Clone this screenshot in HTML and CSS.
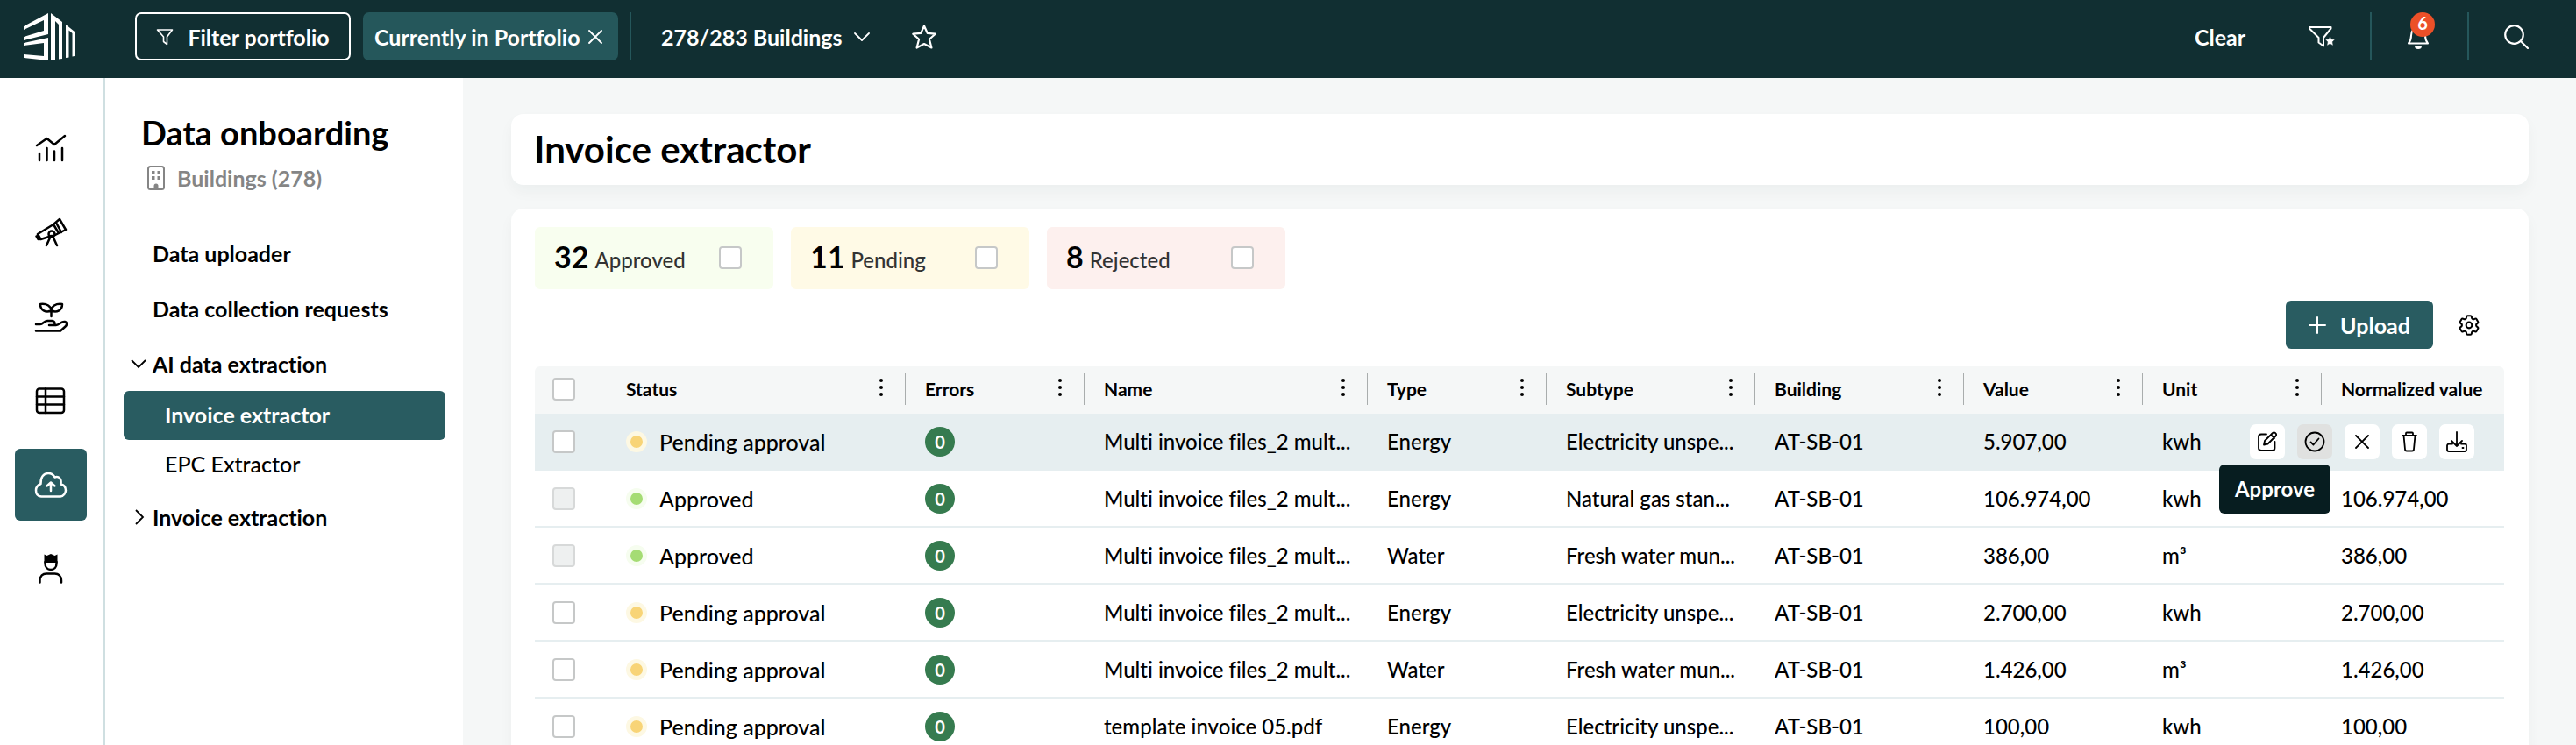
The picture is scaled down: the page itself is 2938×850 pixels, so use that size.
FILE: index.html
```html
<!DOCTYPE html>
<html lang="en">
<head>
    <meta charset="UTF-8">
    <meta name="viewport" content="width=device-width, initial-scale=1.0">
    <title>Invoice extractor</title>
    <link rel="stylesheet" href="styles.css">
</head>
<body>
    <header class="topbar">
        <a class="logo" href="#" aria-label="Home">
            <svg width="58" height="54" viewBox="0 0 58 54" fill="#fff">
                <path d="M0 15L28 0V24L0 31V27L23 20V8L0 19z"/>
                <path d="M0 34L28 28V54L0 51V47L23 49V34L0 37z"/>
                <path d="M31 0L44 10V52L40 52.500V13L36 9V53L31 54z"/>
                <path d="M48 13L58 21V49L55.500 49.500V23L51.500 19.500V50.500L48 51z"/>
            </svg>
        </a>
        <button class="btn-filter" type="button">
            <svg width="20" height="20" viewBox="0 0 20 20" fill="none" stroke="#fff" stroke-width="1.600" stroke-linejoin="round"><path d="M1.500 2h17l-6 8v8.500l-4-3V10z"/></svg>
            Filter portfolio
        </button>
        <button class="chip" type="button">
            Currently in Portfolio
            <svg width="16" height="16" viewBox="0 0 16 16" stroke="#fff" stroke-width="1.800" stroke-linecap="round"><path d="M1 1l14 14M15 1L1 15"/></svg>
        </button>
        <span class="divider thin"></span>
        <button class="btn-buildings" type="button">
            278/283 Buildings
            <svg width="18" height="12" viewBox="0 0 18 12" fill="none" stroke="#fff" stroke-width="1.800" stroke-linecap="round" stroke-linejoin="round"><path d="M1 2l8 8 8-8"/></svg>
        </button>
        <button class="btn-icon" type="button" aria-label="Favourite">
            <svg width="28" height="28" viewBox="0 0 28 28" fill="none" stroke="#fff" stroke-width="2.200" stroke-linejoin="round"><path d="M14 1.500l3.700 8.300 9 .9-6.800 6 2.500 9.800L14 22l-8.400 4.500 2.500-9.800-6.800-6 9-.9z"/></svg>
        </button>
        <div class="topbar-right">
            <button class="btn-clear" type="button">Clear</button>
            <button class="btn-icon" type="button" aria-label="Saved filters">
                <svg width="30" height="26" viewBox="0 0 30 26" fill="none" stroke="#fff" stroke-width="2" stroke-linejoin="round"><path d="M1 2h24.500v1.500L17 14v9.500l-5.500-4V14L1 3.500z"/><path d="M24.500 12l1.700 3.700 3.800.4-2.800 2.700.9 4.200-3.600-2.100-3.600 2.100.9-4.200-2.800-2.700 3.800-.4z" fill="#fff" stroke="#112f32" stroke-width=".4"/></svg>
            </button>
            <span class="divider"></span>
            <button class="btn-icon bell" type="button" aria-label="Notifications">
                <svg width="26" height="28" viewBox="0 0 26 28" fill="none" stroke="#fff" stroke-width="2" stroke-linejoin="round"><path d="M2 21.500c2.500-3 3-5 3-9C5 7 8 4 13 4s8 3 8 8.500c0 4 .5 6 3 9z"/><path d="M9 24.500h8a4 3.500 0 0 1-8 0z" fill="#fff" stroke="none"/></svg>
                <span class="badge">6</span>
            </button>
            <span class="divider"></span>
            <button class="btn-icon" type="button" aria-label="Search">
                <svg width="28" height="28" viewBox="0 0 28 28" fill="none" stroke="#fff" stroke-width="2.200" stroke-linecap="round"><circle cx="11.500" cy="11.500" r="10.300"/><path d="M19 19l8 8"/></svg>
            </button>
        </div>
    </header>

    <div class="layout">
        <nav class="rail" aria-label="Main">
            <a href="#" aria-label="Analytics">
                <svg width="38" height="36" viewBox="0 0 38 36"><path d="M3 15L14.500 7 23 14 35 4M6 24v8M14.500 18v14M23 21.500V32M32 18v14"/></svg>
            </a>
            <a href="#" aria-label="Explore">
                <svg width="38" height="36" viewBox="0 0 38 36"><path d="M22 9l7-6 7 12-8 4zM22 9L4 20l3.500 6L17 23M24 21l4-2M25 7l6 11M2.500 22.500l2 3.500M4 21l3 5M19 22l-5 11M21 22l5 11"/><circle cx="20" cy="20" r="3.500"/></svg>
            </a>
            <a href="#" aria-label="Sustainability">
                <svg width="38" height="36" viewBox="0 0 38 36"><path d="M19.500 18v-6.500c0-5-5-8.500-12.500-7.500 0 7 6 10 12.500 7.500zM19.500 11.500c0-5 5-8.500 12.500-7.500 0 7-6 10-12.500 7.500M2 27h5c3 0 4-4 8-4h5c4 0 5 5 1 5h-4 8c4 0 6-5 10-4 3 1 2.500 4 0 6l-5 4.500H2"/></svg>
            </a>
            <a href="#" aria-label="Tables">
                <svg width="38" height="36" viewBox="0 0 38 36"><rect x="3" y="4.500" width="31" height="27.500" rx="3"/><path d="M3 13.500h31M3 22.500h31M13 4.500V32"/></svg>
            </a>
            <a class="active" href="#" aria-label="Data onboarding">
                <svg width="38" height="36" viewBox="0 0 38 36"><path d="M8 31.500C4 31 2 28 2 24.500S4 18.500 7.500 17C7 10 10.500 5 16 5c4 0 6 1.500 7.500 4.500C28 8 31.500 11 30.500 17.500c4 1 5.500 4 5.500 7s-2.500 6.500-6 7zM19 25v-9M14.500 19.500L19 15.500l4.500 4"/></svg>
            </a>
            <a href="#" aria-label="Account">
                <svg width="38" height="36" viewBox="0 0 38 36"><path d="M6.500 33.500v-2C6.500 26 10 23.500 14 23.500h9.500c4 0 7.500 2.500 7.500 8v2M12.500 10v2c0 4 2.500 7 6.500 7s6.500-3 6.500-7v-2"/><path d="M11.500 1.500l3 1.500L19 1l4.500 2 3-1.500V11h-15z" fill="#000" stroke="none"/></svg>
            </a>
        </nav>

        <aside class="panel">
            <h2>Data onboarding</h2>
            <p class="scope">
                <svg width="20" height="28" viewBox="0 0 20 28" fill="none" stroke="#858585" stroke-width="2"><rect x="1" y="1" width="18" height="26" rx="2.500"/><path d="M5 8h3.500M11.500 8H15M5 14h3.500M11.500 14H15" stroke-width="4"/><path d="M7.500 27v-4a2.500 2.500 0 0 1 5 0v4z" fill="#858585" stroke="none"/></svg>
                Buildings (278)
            </p>
            <nav class="tree" aria-label="Data onboarding">
                <a href="#">Data uploader</a>
                <a href="#">Data collection requests</a>
                <button type="button" aria-expanded="true">
                    <svg width="18" height="18" viewBox="0 0 18 18"><path d="M1 5l8 8 8-8"/></svg>
                    AI data extraction
                </button>
                <a class="sub active" href="#">Invoice extractor</a>
                <a class="sub" href="#">EPC Extractor</a>
                <button type="button" aria-expanded="false">
                    <svg width="18" height="18" viewBox="0 0 18 18"><path d="M6 1l8 8-8 8"/></svg>
                    Invoice extraction
                </button>
            </nav>
        </aside>

        <main class="content">
            <section class="card title-card">
                <h1>Invoice extractor</h1>
            </section>

            <section class="card table-card">
                <div class="summary">
                    <label class="stat approved"><b>32</b> <span>Approved</span><input type="checkbox"></label>
                    <label class="stat pending"><b>11</b> <span>Pending</span><input type="checkbox"></label>
                    <label class="stat rejected"><b>8</b> <span>Rejected</span><input type="checkbox"></label>
                </div>

                <div class="toolbar">
                    <button class="btn-upload" type="button">
                        <svg width="20" height="20" viewBox="0 0 20 20" stroke="#fff" stroke-width="2" stroke-linecap="round"><path d="M10 1v18M1 10h18"/></svg>
                        Upload
                    </button>
                    <button class="btn-settings" type="button" aria-label="Table settings">
                        <svg width="24" height="24" viewBox="2 2 20 20" fill="none" stroke="#000" stroke-width="1.700" stroke-linejoin="round"><path d="M9.594 3.940c.09-.542.56-.94 1.110-.94h2.593c.55 0 1.020.398 1.110.94l.213 1.281c.063.374.313.686.645.87.074.04.147.083.22.127.325.196.72.257 1.075.124l1.217-.456a1.125 1.125 0 0 1 1.370.49l1.296 2.247a1.125 1.125 0 0 1-.26 1.431l-1.003.827c-.293.241-.438.613-.43.992a7.723 7.723 0 0 1 0 .255c-.008.378.137.75.43.991l1.004.827c.424.35.534.955.26 1.430l-1.298 2.247a1.125 1.125 0 0 1-1.369.491l-1.217-.456c-.355-.133-.75-.072-1.076.124a6.470 6.470 0 0 1-.22.128c-.331.183-.581.495-.644.869l-.213 1.281c-.09.543-.56.94-1.110.94h-2.594c-.55 0-1.019-.398-1.110-.94l-.213-1.281c-.062-.374-.312-.686-.644-.87a6.520 6.520 0 0 1-.22-.127c-.325-.196-.72-.257-1.076-.124l-1.217.456a1.125 1.125 0 0 1-1.369-.49l-1.297-2.247a1.125 1.125 0 0 1 .26-1.431l1.004-.827c.292-.24.437-.613.43-.991a6.932 6.932 0 0 1 0-.255c.007-.38-.138-.751-.43-.992l-1.004-.827a1.125 1.125 0 0 1-.26-1.430l1.297-2.247a1.125 1.125 0 0 1 1.370-.491l1.216.456c.356.133.751.072 1.076-.124.072-.044.146-.086.22-.128.332-.183.582-.495.644-.869z"/><circle cx="12" cy="12" r="2.800"/></svg>
                    </button>
                </div>

                <table>
                    <colgroup>
                        <col class="col-check">
                        <col class="col-status">
                        <col class="col-small">
                        <col class="col-name">
                        <col class="col-small">
                        <col class="col-medium">
                        <col class="col-medium">
                        <col class="col-small">
                        <col class="col-small">
                        <col>
                    </colgroup>
                    <thead>
                        <tr>
                            <th><input type="checkbox" aria-label="Select all"></th>
                            <th><div class="head">Status <button type="button" class="kebab" aria-label="Status menu"><i></i><i></i><i></i></button></div></th>
                            <th><div class="head">Errors <button type="button" class="kebab" aria-label="Errors menu"><i></i><i></i><i></i></button></div></th>
                            <th><div class="head">Name <button type="button" class="kebab" aria-label="Name menu"><i></i><i></i><i></i></button></div></th>
                            <th><div class="head">Type <button type="button" class="kebab" aria-label="Type menu"><i></i><i></i><i></i></button></div></th>
                            <th><div class="head">Subtype <button type="button" class="kebab" aria-label="Subtype menu"><i></i><i></i><i></i></button></div></th>
                            <th><div class="head">Building <button type="button" class="kebab" aria-label="Building menu"><i></i><i></i><i></i></button></div></th>
                            <th><div class="head">Value <button type="button" class="kebab" aria-label="Value menu"><i></i><i></i><i></i></button></div></th>
                            <th><div class="head">Unit <button type="button" class="kebab" aria-label="Unit menu"><i></i><i></i><i></i></button></div></th>
                            <th>Normalized value</th>
                        </tr>
                    </thead>
                    <tbody>
                        <tr class="hovered">
                            <td><input type="checkbox" aria-label="Select row"></td>
                            <td><div class="status"><span class="dot yellow"></span>Pending approval</div></td>
                            <td><span class="errors">0</span></td>
                            <td>Multi invoice files_2 mult...</td>
                            <td>Energy</td>
                            <td>Electricity unspe...</td>
                            <td>AT-SB-01</td>
                            <td>5.907,00</td>
                            <td>kwh</td>
                            <td class="actions-cell">
                                <div class="actions">
                                    <button type="button" aria-label="Edit">
                                        <svg width="24" height="24" viewBox="0 0 24 24"><path d="M11 3.500H5A3 3 0 0 0 2 6.500V19a3 3 0 0 0 3 3h12.500a3 3 0 0 0 3-3v-7M8 15.500l1-4.500 9-9a2 2 0 0 1 3 0l.5.500a2 2 0 0 1 0 3l-9 9zM16 4l4 4"/></svg>
                                    </button>
                                    <button type="button" class="current" aria-label="Approve">
                                        <svg width="24" height="24" viewBox="0 0 24 24"><circle cx="12" cy="12" r="10.500"/><path d="M7.500 12.500l3 3 6-7"/></svg>
                                        <span class="tooltip">Approve</span>
                                    </button>
                                    <button type="button" aria-label="Reject">
                                        <svg width="24" height="24" viewBox="0 0 24 24"><path d="M5 5l14 14M19 5L5 19"/></svg>
                                    </button>
                                    <button type="button" aria-label="Delete">
                                        <svg width="24" height="24" viewBox="0 0 24 24"><path d="M4 5h16M8 5V2.500a1 1 0 0 1 1-1h6a1 1 0 0 1 1 1V5M5.500 5l1.500 15.500a2 2 0 0 0 2 2h6a2 2 0 0 0 2-2L18.500 5"/></svg>
                                    </button>
                                    <button type="button" aria-label="Download">
                                        <svg width="24" height="24" viewBox="0 0 24 24"><path d="M12 1v16M6 11l6 6 6-6M7 14.500H3a2 2 0 0 0-2 2V21a2 2 0 0 0 2 2h18a2 2 0 0 0 2-2v-4.500a2 2 0 0 0-2-2h-4M18.500 19h1"/></svg>
                                    </button>
                                </div>
                            </td>
                        </tr>
                        <tr>
                            <td><input type="checkbox" aria-label="Select row" disabled></td>
                            <td><div class="status"><span class="dot green"></span>Approved</div></td>
                            <td><span class="errors">0</span></td>
                            <td>Multi invoice files_2 mult...</td>
                            <td>Energy</td>
                            <td>Natural gas stan...</td>
                            <td>AT-SB-01</td>
                            <td>106.974,00</td>
                            <td>kwh</td>
                            <td>106.974,00</td>
                        </tr>
                        <tr>
                            <td><input type="checkbox" aria-label="Select row" disabled></td>
                            <td><div class="status"><span class="dot green"></span>Approved</div></td>
                            <td><span class="errors">0</span></td>
                            <td>Multi invoice files_2 mult...</td>
                            <td>Water</td>
                            <td>Fresh water mun...</td>
                            <td>AT-SB-01</td>
                            <td>386,00</td>
                            <td>m³</td>
                            <td>386,00</td>
                        </tr>
                        <tr>
                            <td><input type="checkbox" aria-label="Select row"></td>
                            <td><div class="status"><span class="dot yellow"></span>Pending approval</div></td>
                            <td><span class="errors">0</span></td>
                            <td>Multi invoice files_2 mult...</td>
                            <td>Energy</td>
                            <td>Electricity unspe...</td>
                            <td>AT-SB-01</td>
                            <td>2.700,00</td>
                            <td>kwh</td>
                            <td>2.700,00</td>
                        </tr>
                        <tr>
                            <td><input type="checkbox" aria-label="Select row"></td>
                            <td><div class="status"><span class="dot yellow"></span>Pending approval</div></td>
                            <td><span class="errors">0</span></td>
                            <td>Multi invoice files_2 mult...</td>
                            <td>Water</td>
                            <td>Fresh water mun...</td>
                            <td>AT-SB-01</td>
                            <td>1.426,00</td>
                            <td>m³</td>
                            <td>1.426,00</td>
                        </tr>
                        <tr>
                            <td><input type="checkbox" aria-label="Select row"></td>
                            <td><div class="status"><span class="dot yellow"></span>Pending approval</div></td>
                            <td><span class="errors">0</span></td>
                            <td>template invoice 05.pdf</td>
                            <td>Energy</td>
                            <td>Electricity unspe...</td>
                            <td>AT-SB-01</td>
                            <td>100,00</td>
                            <td>kwh</td>
                            <td>100,00</td>
                        </tr>
                    </tbody>
                </table>
            </section>
        </main>
    </div>
</body>
</html>
```
FILE: styles.css
```css
* {
    margin: 0;
    padding: 0;
    box-sizing: border-box;
}

body {
    font-family: Lato, 'Open Sans', sans-serif;
    font-size: 25px;
    font-variant-ligatures: none;
    line-height: 30px;
    color: #000;
    background-color: #f5f7f7;
    height: 100vh;
    display: flex;
    flex-direction: column;
    overflow: hidden;
}

button {
    font: inherit;
    font-variant-ligatures: none;
    color: inherit;
    background: none;
    border: none;
    cursor: pointer;
    white-space: nowrap;
}

a {
    color: inherit;
    text-decoration: none;
}

svg {
    display: block;
    flex-shrink: 0;
}

/* Top bar */
.topbar {
    display: flex;
    align-items: center;
    flex-shrink: 0;
    padding: 14px 54px 20px 27px;
    background-color: #112f32;
    color: #fff;
    font-weight: bold;
}

.logo {
    margin-right: 69px;
}

.btn-filter,
.chip,
.btn-buildings {
    display: flex;
    align-items: center;
    justify-content: center;
    height: 55px;
}

.btn-filter {
    gap: 16px;
    min-width: 246px;
    border: 2px solid #fff;
    border-radius: 7px;
}

.chip {
    justify-content: flex-start;
    gap: 9px;
    min-width: 291px;
    margin-left: 14px;
    padding-left: 13px;
    border-radius: 7px;
    background-color: #25575b;
}

.divider {
    width: 2px;
    height: 55px;
    background-color: #25575b;
}

.divider.thin {
    width: 1px;
    margin-left: 14px;
}

.btn-buildings {
    gap: 14px;
    margin-left: 34px;
    margin-right: 48px;
}

.topbar-right {
    display: flex;
    align-items: center;
    gap: 40px;
    margin-left: auto;
}

.btn-clear {
    margin-right: 32px;
}

.bell {
    position: relative;
    margin-right: 3px;
}

.badge {
    position: absolute;
    top: -14px;
    left: 4px;
    width: 28px;
    height: 28px;
    border-radius: 50%;
    background-color: #ec5028;
    font-size: 20px;
    line-height: 24px;
    text-align: center;
}

.layout {
    display: flex;
    flex: 1;
    min-height: 0;
}

/* Icon rail */
.rail {
    display: flex;
    flex-direction: column;
    align-items: center;
    flex-shrink: 0;
    gap: 14px;
    width: 120px;
    padding-top: 39px;
    padding-right: 2px;
    background-color: #fff;
    border-right: 2px solid #cfdfe1;
}

.rail a {
    display: flex;
    align-items: center;
    justify-content: center;
    width: 82px;
    height: 82px;
    border-radius: 6px;
}

.rail svg {
    fill: none;
    stroke: #000;
    stroke-width: 2.5;
    stroke-linecap: round;
    stroke-linejoin: round;
}

.rail .active {
    background-color: #295c61;
}

.rail .active svg {
    stroke: #fff;
}

/* Side panel */
.panel {
    flex-shrink: 0;
    width: 408px;
    padding: 40px 20px 0 21px;
    background-color: #fff;
}

.panel h2 {
    padding-left: 20px;
    font-size: 38px;
    line-height: 44px;
}

.scope {
    display: flex;
    align-items: center;
    gap: 14px;
    margin: 15px 0 39px 27px;
    color: #858585;
    font-weight: bold;
}

.tree {
    display: flex;
    flex-direction: column;
}

.tree a,
.tree button {
    display: flex;
    align-items: center;
    gap: 7px;
    height: 63px;
    padding-left: 33px;
    border-radius: 6px;
    font-weight: bold;
}

.tree button {
    padding-left: 8px;
}

.tree svg {
    fill: none;
    stroke: #000;
    stroke-width: 1.8;
}

.tree .sub {
    height: 56px;
    padding-left: 47px;
    padding-bottom: 2px;
    font-weight: 500;
}

.tree .sub.active {
    background-color: #295c61;
    color: #fff;
    font-weight: bold;
}

/* Main content */
.content {
    flex: 1;
    min-width: 0;
    padding: 41px 54px 0 55px;
}

.card {
    background-color: #fff;
    border-radius: 14px;
    box-shadow: 0 8px 16px rgba(17, 47, 50, 0.04);
}

.title-card {
    padding: 15px 26px 16px;
    margin-bottom: 27px;
}

h1 {
    font-size: 42px;
    line-height: 50px;
}

.table-card {
    padding: 21px 28px 20px 27px;
}

.summary {
    display: flex;
    gap: 20px;
}

.stat {
    display: flex;
    align-items: baseline;
    gap: 7px;
    width: 272px;
    height: 71px;
    padding: 14px 36px 0 22px;
    border-radius: 6px;
    color: #333;
    font-size: 24px;
    font-weight: 500;
}

.stat b {
    color: #000;
    font-size: 34px;
    line-height: 40px;
}

.stat input {
    align-self: flex-start;
    margin: 8px 0 0 auto;
}

.approved {
    background-color: #f8feef;
}

.pending {
    background-color: #fffae6;
}

.rejected {
    background-color: #fdf0ee;
}

input[type="checkbox"] {
    appearance: none;
    display: block;
    flex-shrink: 0;
    width: 26px;
    height: 26px;
    border: 2px solid #c6c8c8;
    border-radius: 4px;
    background-color: #fff;
}

input[type="checkbox"]:disabled {
    border-color: #d7d9d9;
    background-color: #eef0f0;
}

.toolbar {
    display: flex;
    align-items: center;
    justify-content: flex-end;
    gap: 29px;
    padding: 13px 28px 20px 0;
}

.btn-upload {
    display: flex;
    align-items: center;
    justify-content: center;
    gap: 16px;
    min-width: 168px;
    height: 55px;
    border-radius: 6px;
    background-color: #295c61;
    color: #fff;
    font-weight: bold;
}

/* Table */
table {
    width: 100%;
    table-layout: fixed;
    border-collapse: separate;
    border-spacing: 0;
}

.col-check {
    width: 82px;
}

.col-status {
    width: 341px;
}

.col-small {
    width: 204px;
}

.col-name {
    width: 323px;
}

.col-medium {
    width: 238px;
}

th {
    height: 54px;
    padding-left: 22px;
    padding-bottom: 2px;
    background-color: #f5f7f7;
    font-size: 21px;
    text-align: left;
    white-space: nowrap;
}

th:first-child {
    border-top-left-radius: 6px;
}

th:last-child {
    border-top-right-radius: 6px;
}

.head {
    display: flex;
    align-items: center;
    justify-content: space-between;
    height: 36px;
    padding-right: 23px;
    border-right: 1px solid #a9adad;
}

.kebab {
    display: flex;
    flex-direction: column;
    gap: 4px;
    padding: 0 2px 4px;
}

.kebab i {
    width: 4px;
    height: 4px;
    border-radius: 50%;
    background-color: #000;
}

td {
    height: 65px;
    padding-left: 22px;
    border-bottom: 2px solid #e6eef0;
    font-size: 24px;
    font-weight: 500;
    white-space: nowrap;
}

th:first-child,
td:first-child {
    padding-left: 20px;
}

.hovered td {
    background-color: #e6eef0;
}

.status {
    display: flex;
    align-items: center;
    gap: 14px;
    font-size: 25px;
}

.dot {
    width: 24px;
    height: 24px;
    border: 5px solid;
    border-radius: 50%;
}

.dot.yellow {
    border-color: #fdf8e3;
    background-color: #f8d477;
}

.dot.green {
    border-color: #f6fdef;
    background-color: #a5dc74;
}

.errors {
    display: block;
    width: 34px;
    height: 34px;
    border-radius: 50%;
    background-color: #367b4f;
    color: #fff;
    font-size: 20px;
    font-weight: bold;
    line-height: 34px;
    text-align: center;
}

.actions-cell {
    position: relative;
}

/* Row actions float over the last two columns */
.actions {
    position: absolute;
    top: 12px;
    right: 34px;
    display: flex;
    gap: 14px;
}

.actions button {
    position: relative;
    display: flex;
    align-items: center;
    justify-content: center;
    width: 40px;
    height: 40px;
    border-radius: 7px;
    background-color: #fff;
}

.actions .current {
    background-color: #e0e1e0;
}

.actions svg {
    fill: none;
    stroke: #000;
    stroke-width: 1.8;
    stroke-linecap: round;
    stroke-linejoin: round;
}

.tooltip {
    position: absolute;
    top: 46px;
    right: 2px;
    z-index: 1;
    padding: 13px 18px;
    border-radius: 6px;
    background-color: #071d20;
    color: #fff;
    font-weight: bold;
}
```
